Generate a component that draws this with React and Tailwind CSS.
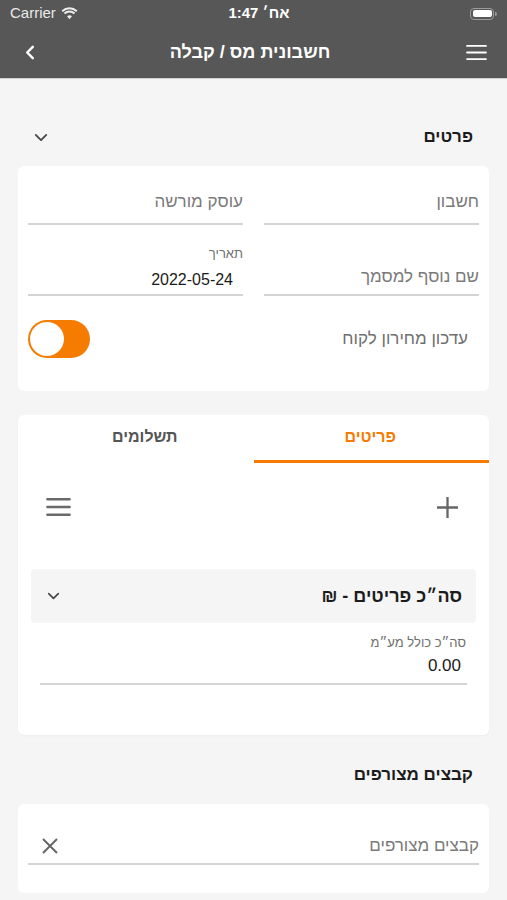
import React from 'react'

const font = { fontFamily: '"Liberation Sans", "DejaVu Sans", sans-serif' }

// ═══ small drawings ══════════════════════════════════════════════════════════
function Chevron({ className }) {
  return (
    <svg viewBox="0 0 16 10" className={className} fill="none" stroke="currentColor" strokeWidth="2" strokeLinecap="round" strokeLinejoin="round">
      <path d="M2 2l6 6 6-6" />
    </svg>
  )
}

function Burger({ className, w = 2 }) {
  return (
    <svg viewBox="0 0 24 18" className={className} fill="none" stroke="currentColor" strokeWidth={w} strokeLinecap="round">
      <path d="M2 2h20M2 9h20M2 16h20" />
    </svg>
  )
}

function Field({ label, value, placeholder, tall }) {
  return (
    <div className={`flex flex-col justify-end border-b-2 border-[#d4d4d4] ${tall ? 'h-[71px]' : 'h-[59px] pb-[3px]'}`}>
      {label && <span className="text-[13px] text-[#6f6f6f] leading-none mb-[12px]">{label}</span>}
      {value
        ? <span className="text-[16px] text-[#1a1a1a] leading-none mb-[6px] pr-[10px]">{value}</span>
        : <span className={`text-[17px] text-[#7a7a7a] leading-none ${tall ? 'mb-[9px]' : 'mb-[10px]'}`}>{placeholder}</span>}
    </div>
  )
}

// ═══ App ═════════════════════════════════════════════════════════════════════
export default function App() {
  return (
    <div dir="rtl" style={font} className="w-[507px] h-[900px] overflow-hidden bg-[#f5f5f5]">
      {/* status bar */}
      <div dir="ltr" className="h-[27px] bg-[#575757] flex items-center justify-between px-[10px] text-white text-[15px]">
        <div className="flex items-center gap-[5px] text-[#e9e9e9]">
          <span>Carrier</span>
          <svg viewBox="0 0 18 13" className="w-[17px] h-[13px]" fill="#eee">
            <path d="M9 12.5l2.6-3.1a4 4 0 0 0-5.2 0z" />
            <path d="M9 5.5a7 7 0 0 1 4.6 1.7l1.4-1.6A9.2 9.2 0 0 0 9 3.3a9.2 9.2 0 0 0-6 2.3l1.4 1.6A7 7 0 0 1 9 5.5z" />
            <path d="M9 0A12.5 12.5 0 0 0 .6 3.2L2 4.8A10.4 10.4 0 0 1 9 2.1a10.4 10.4 0 0 1 7 2.7l1.4-1.6A12.5 12.5 0 0 0 9 0z" />
          </svg>
        </div>
        <span dir="rtl" className="font-semibold text-[15px] mr-[30px]">אח׳ 1:47</span>
        <div className="flex items-center">
          <div className="w-[24px] h-[12px] rounded-[4px] border border-[#9a9a9a] p-[1.5px]">
            <div className="w-full h-full bg-white rounded-[2px]" />
          </div>
          <div className="w-[2px] h-[4px] bg-[#9a9a9a] rounded-r-sm ml-[1px]" />
        </div>
      </div>

      {/* nav bar */}
      <div className="h-[52px] bg-[#575757] flex items-center justify-between px-[19px] border-b border-[#cfcfcf]">
        <Burger className="w-[23px] h-[17px] text-white" />
        <span className="text-white text-[18px] font-bold">חשבונית מס / קבלה</span>
        <svg viewBox="0 0 10 16" className="w-[10px] h-[15px] ml-[6px]" fill="none" stroke="white" strokeWidth="2.6" strokeLinecap="round" strokeLinejoin="round">
          <path d="M8 2L2 8l6 6" />
        </svg>
      </div>

      <div className="px-[18px]">
        {/* details */}
        <div className="flex items-center justify-between h-[46px] mt-[35px] pr-[16px] pl-[16px]">
          <span className="text-[17px] font-bold text-[#1c1c1c]">פרטים</span>
          <Chevron className="w-[14px] h-[9px] text-[#444]" />
        </div>
        <div className="bg-white rounded-[6px] mt-[6px] h-[225px] px-[10px]">
          <div className="grid grid-cols-2 gap-x-[21px]">
            <Field placeholder="חשבון" />
            <Field placeholder="עוסק מורשה" />
            <Field placeholder="שם נוסף למסמך" tall />
            <Field label="תאריך" value="2022-05-24" tall />
          </div>
          <div className="flex items-center justify-between h-[84px] pr-[11px] pt-[1px]">
            <span className="text-[17px] text-[#6f6f6f]">עדכון מחירון לקוח</span>
            <div className="w-[62px] h-[38px] rounded-full bg-[#f57c00] flex items-center justify-end p-[2px]">
              <div className="w-[34px] h-[34px] rounded-full bg-white" />
            </div>
          </div>
        </div>

        {/* items card */}
        <div className="bg-white rounded-[6px] mt-[24px] h-[320px] shadow-[0_1px_2px_rgba(0,0,0,0.04)]">
          <div className="grid grid-cols-2 h-[48px]">
            <div className="flex items-center justify-center border-b-[3px] border-[#f57c00] pb-[2px] text-[#f57c00] text-[16px] font-bold">
              <span className="mr-[2px]">פריטים</span>
            </div>
            <div className="flex items-center justify-center pb-[5px] text-[#555] text-[16px] font-bold">
              <span className="ml-[18px]">תשלומים</span>
            </div>
          </div>
          <div className="flex items-center justify-between h-[88px] pr-[31px] pl-[26px]">
            <svg viewBox="0 0 20 20" className="w-[21px] h-[21px]" fill="none" stroke="#666" strokeWidth="2.2">
              <path d="M10 0v20M0 10h20" />
            </svg>
            <Burger className="w-[29px] h-[20px] text-[#6a6a6a]" w={2.2} />
          </div>
          <div className="mx-[13px] mt-[18px] h-[54px] bg-[#f5f5f5] rounded-[4px] flex items-center justify-between pr-[14px] pl-[16px]">
            <span className="text-[18px] font-bold text-[#1c1c1c]">סה״כ פריטים - ₪</span>
            <Chevron className="w-[13px] h-[8px] text-[#444]" />
          </div>
          <div className="mx-[22px] mt-[13px] border-b-2 border-[#d4d4d4] pr-[1px] pb-[9px]">
            <div className="text-[13px] text-[#6f6f6f] leading-none">סה״כ כולל מע״מ</div>
            <div className="text-[17px] text-[#1a1a1a] leading-none mt-[8px] pr-[5px]">0.00</div>
          </div>
        </div>

        {/* attachments */}
        <div className="h-[40px] mt-[20px] flex items-center pr-[16px]">
          <span className="text-[17px] font-bold text-[#1c1c1c]">קבצים מצורפים</span>
        </div>
        <div className="bg-white rounded-[6px] mt-[9px] h-[89px] px-[10px] pt-[29px]">
          <div className="flex items-center justify-between border-b-2 border-[#d4d4d4] pb-[4px]">
            <span className="text-[17px] text-[#7a7a7a]">קבצים מצורפים</span>
            <svg viewBox="0 0 16 16" className="w-[16px] h-[16px] ml-[14px]" fill="none" stroke="#666" strokeWidth="2">
              <path d="M1 1l14 14M15 1L1 15" />
            </svg>
          </div>
        </div>
      </div>
    </div>
  )
}
